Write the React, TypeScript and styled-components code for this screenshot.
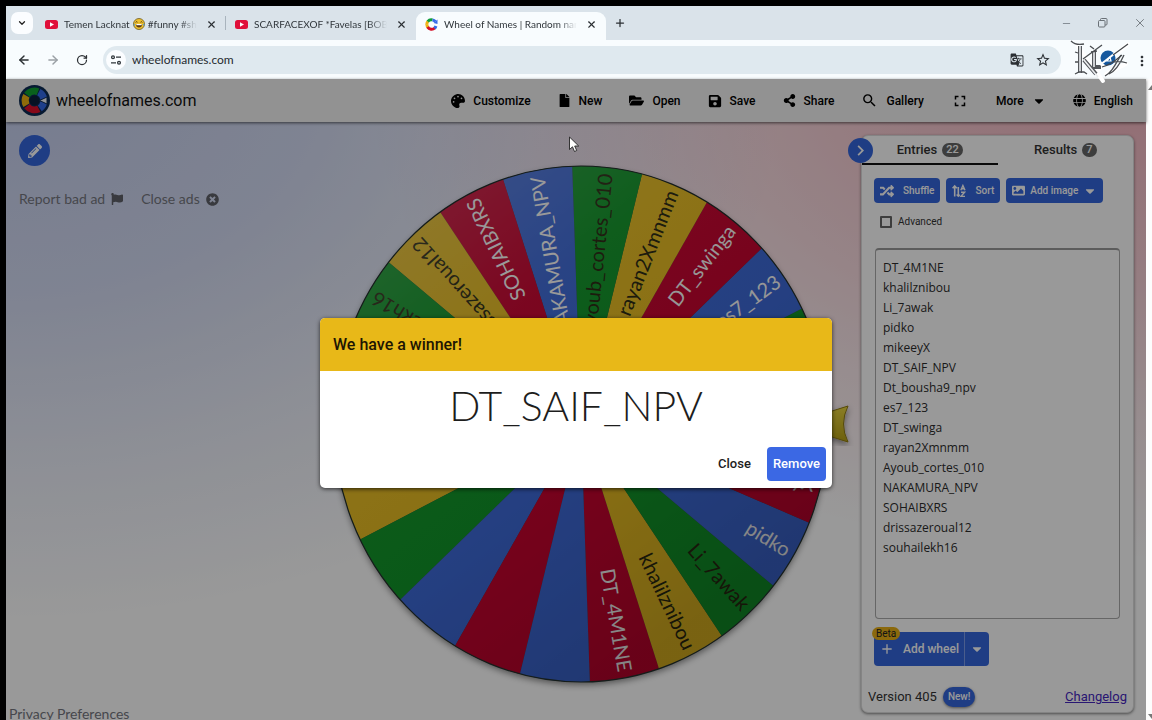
import React from "react";
import styled, { createGlobalStyle } from "styled-components";
import {
  FaPalette, FaFile, FaFolderOpen, FaSave, FaShareAlt, FaGlobe, FaRandom, FaImage,
  FaCaretDown, FaPencilAlt, FaFlag, FaTimesCircle,
} from "react-icons/fa";
import { MdSearch, MdFullscreen, MdGTranslate, MdStarOutline, MdMoreVert, MdAdd, MdChevronRight } from "react-icons/md";
import { ArrowLeft, ArrowRight, RotateCw, X, Plus, ChevronDown, Minus } from "lucide-react";

const ui = `Roboto, "Liberation Sans", sans-serif`;
const system = `"Open Sans", "Noto Sans", sans-serif`;
const display = `Lato, "Liberation Sans", sans-serif`;

const GlobalStyle = createGlobalStyle`
  * { box-sizing: border-box; }
  html, body { margin: 0; background: #000; overflow: hidden; }
  button { font: inherit; color: inherit; border: 0; background: none; padding: 0; cursor: pointer; }
  svg { display: block; flex: none; }
`;

const Screen = styled.div`
  height: 100vh;
  overflow: hidden;
  padding: 6px 0 0 6px;
  background: #000;
`;

const BrowserWindow = styled.div`
  display: flex;
  flex-direction: column;
  height: 100vh;
  background: #fff;
`;

/* ---- browser chrome ---- */

const TabStrip = styled.div`
  display: flex;
  align-items: stretch;
  flex: none;
  height: 34px;
  padding-top: 6px;
  background: #dae3ea;
  font: 10px ${display};
  color: #30363b;
`;

const TabSearch = styled.button`
  display: grid;
  place-items: center;
  width: 22px;
  height: 22px;
  margin: 0 3px 0 5px;
  border-radius: 7px;
  background: #fbfdff;
  color: #222;
`;

const Tab = styled.div<{ $active?: boolean; $divider?: boolean }>`
  position: relative;
  display: flex;
  align-items: center;
  width: 190px;
  padding: 0 8px 4px 9px;
  border-radius: 9px 9px 0 0;
  background: ${(p) => (p.$active ? "#f8fcfe" : "transparent")};
  &::after {
    content: "";
    display: ${(p) => (p.$divider ? "block" : "none")};
    position: absolute;
    right: 0;
    top: 4px;
    width: 1px;
    height: 14px;
    background: #a9b4bd;
  }
`;

const TabTitle = styled.span`
  display: flex;
  align-items: center;
  gap: 3px;
  flex: 1;
  margin: 0 7px 0 6px;
  overflow: hidden;
  white-space: nowrap;
  mask-image: linear-gradient(90deg, #000 86%, transparent);
`;

const IconButton = styled.button<{ $size?: number; $color?: string }>`
  display: grid;
  place-items: center;
  width: ${(p) => p.$size ?? 14}px;
  height: ${(p) => p.$size ?? 14}px;
  color: ${(p) => p.$color ?? "#2b2f33"};
`;

const NewTab = styled(IconButton)`
  margin: 4px 0 0 7px;
`;

const WindowControls = styled.div`
  display: flex;
  gap: 23px;
  margin: 4px 5px 0 auto;
`;

const Toolbar = styled.div`
  display: flex;
  align-items: center;
  flex: none;
  height: 39px;
  padding: 0 4px 0 10px;
  background: #f8fcfe;
`;

const NavButtons = styled.div`
  display: flex;
  gap: 13px;
  margin-right: 13px;
`;

const Omnibox = styled.div`
  display: flex;
  align-items: center;
  flex: 1;
  height: 28px;
  padding: 0 10px 0 3px;
  border-radius: 14px;
  background: #dfe9ef;
`;

const SiteInfo = styled.button`
  display: grid;
  place-items: center;
  width: 20px;
  height: 20px;
  border-radius: 10px;
  background: #fbfdff;
  color: #30363b;
`;

const Address = styled.input`
  flex: 1;
  min-width: 0;
  margin: 0 6px;
  padding: 0;
  border: 0;
  outline: 0;
  background: none;
  font: 12px ${display};
  color: #262b30;
`;

const OmniActions = styled.div`
  display: flex;
  gap: 10px;
`;

const Watermark = styled.svg`
  margin: 0 4px 0 9px;
  position: relative;
  z-index: 5;
  overflow: visible;
`;

/* ---- page ---- */

const Viewport = styled.div`
  display: flex;
  flex: 1;
  min-height: 0;
`;

const Page = styled.div`
  position: relative;
  display: flex;
  flex-direction: column;
  flex: 1;
  min-width: 0;
  background:
    radial-gradient(ellipse 780px 540px at 0 0, rgba(75, 105, 205, 0.32), rgba(75, 105, 205, 0.24) 40%, rgba(75, 105, 205, 0.1) 72%, transparent),
    radial-gradient(ellipse 780px 480px at 100% 0, rgba(225, 50, 80, 0.37), rgba(225, 50, 80, 0.23) 40%, rgba(225, 50, 80, 0.1) 70%, transparent),
    #fff;
`;

const ScrollTrack = styled.div`
  display: flex;
  flex-direction: column;
  justify-content: space-between;
  flex: none;
  width: 6px;
  padding: 6px 0 6px 2px;
  overflow: hidden;
  background: #fdfdfd;
`;

const Header = styled.header`
  display: flex;
  align-items: center;
  justify-content: space-between;
  flex: none;
  height: 43px;
  padding: 0 13px;
  background: #f4f4f4;
  box-shadow: 0 1px 3px rgba(0, 0, 0, 0.6);
  font-family: ${ui};
  color: #000;
`;

const Brand = styled.a`
  display: flex;
  align-items: center;
  gap: 6px;
  font-size: 16px;
  color: #111;
  text-decoration: none;
`;

const Menu = styled.nav`
  display: flex;
  align-items: center;
  gap: 27px;
  font-size: 12px;
  font-weight: 500;
`;

const MenuItem = styled.button`
  display: flex;
  align-items: center;
  gap: 8px;
`;

const Main = styled.main`
  display: grid;
  grid-template-columns: 1fr 540px 273px;
  flex: 1;
  min-height: 0;
  padding-right: 12px;
`;

const Side = styled.div`
  display: flex;
  flex-direction: column;
  align-items: flex-start;
  padding: 13px 0 4px 13px;
  font: 14px/20px ${display};
  color: #75777f;
`;

const RoundButton = styled.button<{ $size: number }>`
  display: grid;
  place-items: center;
  width: ${(p) => p.$size}px;
  height: ${(p) => p.$size}px;
  border-radius: 50%;
  background: #3566dc;
  color: #fff;
`;

const AdLinks = styled.div`
  display: flex;
  gap: 18px;
  margin-top: 23px;
`;

const AdLink = styled.button`
  display: flex;
  align-items: center;
  gap: 6px;
  & > svg { color: #606269; }
`;

const Privacy = styled.a`
  margin: auto 0 0 -10px;
  color: #75777f;
  text-decoration: none;
`;

const WheelArt = styled.svg`
  width: 100%;
  height: 606px;
  font: 20px ${display};
`;

const Panel = styled.section`
  position: relative;
  display: flex;
  flex-direction: column;
  margin: 13px 0 15px;
  border-radius: 7px;
  border: 1px solid #dcdcdc;
  background: #fff;
  box-shadow: 0 1px 3px rgba(0, 0, 0, 0.5);
  font-family: ${ui};
  color: #333;
`;

const Collapse = styled(RoundButton)`
  position: absolute;
  left: -14px;
  top: 2px;
  z-index: 1;
`;

const PanelTabs = styled.div`
  display: grid;
  grid-template-columns: 1fr 1fr;
  height: 29px;
`;

const PanelTab = styled.button<{ $active?: boolean }>`
  display: flex;
  align-items: center;
  justify-content: center;
  gap: 5px;
  font-size: 13px;
  font-weight: 500;
  border-bottom: 2px solid ${(p) => (p.$active ? "#111" : "transparent")};
`;

const Count = styled.span`
  padding: 0 4px;
  border-radius: 7px;
  background: #666;
  color: #fff;
  font-size: 11px;
  line-height: 14px;
`;

const Actions = styled.div`
  display: flex;
  gap: 6px;
  padding: 13px 12px 0;
`;

const Action = styled.button<{ $gap?: number }>`
  display: flex;
  align-items: center;
  gap: ${(p) => p.$gap ?? 9}px;
  height: 25px;
  padding: 0 6px;
  border-radius: 4px;
  background: #3566dc;
  color: #fff;
  font-size: 10px;
  font-weight: 500;
`;

const Advanced = styled.label`
  display: flex;
  align-items: center;
  gap: 6px;
  margin: 12px 0 0 18px;
  font-size: 10px;
  line-height: 13px;
  & > input {
    appearance: none;
    width: 12px;
    height: 12px;
    margin: 0;
    border: 2px solid #666;
    border-radius: 1px;
  }
`;

const EntryBox = styled.textarea`
  flex: 1;
  min-height: 0;
  margin: 20px 13px 13px;
  padding: 8px 7px;
  resize: none;
  outline: 0;
  overflow: hidden;
  border: 1px solid #aaa;
  border-top: 2px solid #999;
  border-radius: 4px;
  background: #fff;
  font: 12px/20px ${system};
  color: #2c2c2c;
`;

const AddWheel = styled.div`
  position: relative;
  display: flex;
  align-self: flex-start;
  height: 34px;
  margin-left: 12px;
  border-radius: 4px;
  background: #3566dc;
  color: #fff;
  font-size: 12px;
  font-weight: 500;
`;

const AddMain = styled.button`
  display: flex;
  align-items: center;
  gap: 8px;
  padding: 0 5px;
`;

const AddMore = styled.button`
  display: grid;
  place-items: center;
  width: 25px;
  border-left: 1px solid #7c9cea;
`;

const Beta = styled.span`
  position: absolute;
  left: -2px;
  top: -5px;
  padding: 0 4px;
  border-radius: 7px;
  background: #e8b016;
  color: #222;
  font-size: 10px;
  font-weight: 400;
  line-height: 13px;
`;

const PanelFooter = styled.footer`
  display: flex;
  align-items: center;
  height: 45px;
  padding: 16px 6px 0;
  margin-bottom: 1px;
  font-size: 13px;
  color: #333;
`;

const NewPill = styled.button`
  height: 20px;
  margin-left: 6px;
  padding: 0 5px;
  border-radius: 10px;
  background: #3566dc;
  color: #fff;
  font-size: 10px;
  font-weight: 500;
  box-shadow: 0 1px 3px rgba(0, 0, 0, 0.5);
`;

const Changelog = styled.a`
  margin-left: auto;
  color: #4527c0;
`;

/* ---- dialog ---- */

const Backdrop = styled.div`
  position: absolute;
  inset: 0;
  z-index: 2;
  display: grid;
  place-items: center;
  background: rgba(0, 0, 0, 0.4);
`;

const Dialog = styled.div`
  width: 512px;
  max-width: 90%;
  border-radius: 5px;
  overflow: hidden;
  background: #fff;
  box-shadow: 0 1px 4px rgba(0, 0, 0, 0.7);
  font-family: ${ui};
`;

const DialogTitle = styled.h2`
  margin: 0;
  padding: 0 13px;
  background: #e8b818;
  color: #1d1503;
  font-size: 16px;
  font-weight: 500;
  line-height: 53px;
`;

const Winner = styled.p`
  margin: 0;
  padding-top: 10px;
  text-align: center;
  font: 300 41px/50px ${display};
  color: #1d1d1d;
`;

const DialogActions = styled.div`
  display: flex;
  justify-content: flex-end;
  gap: 10px;
  padding: 16px 6px 7px;
  font-size: 13px;
  font-weight: 500;
`;

const DialogButton = styled.button<{ $primary?: boolean }>`
  height: 34px;
  padding: 0 6px;
  border-radius: 4px;
  background: ${(p) => (p.$primary ? "#3b68e4" : "transparent")};
  color: ${(p) => (p.$primary ? "#fff" : "#1d1d1d")};
`;

const Pointer = styled.svg`
  position: absolute;
  left: calc(50% - 8px);
  top: 57px;
  z-index: 3;
`;

/* ---- drawings ---- */

const YouTube = () => (
  <svg width="13" height="13" viewBox="0 0 13 13" aria-hidden="true">
    <rect y="2" width="13" height="9" rx="2.5" fill="#e0103a" />
    <path d="M5 4.3 9 6.5 5 8.7z" fill="#fff" />
  </svg>
);

const WheelFavicon = () => (
  <svg width="13" height="13" viewBox="0 0 13 13" fill="none" strokeWidth="3" aria-hidden="true">
    <path d="M1.8 6.5a4.7 4.7 0 0 1 1.2-3.2" stroke="#efb211" />
    <path d="M2.8 3.4A4.7 4.7 0 0 1 7.5 1.9" stroke="#0f9d3a" />
    <path d="M7.5 1.9a4.7 4.7 0 0 1 2.8 1.6" stroke="#3369e8" />
    <path d="M1.8 6.3a4.7 4.7 0 0 0 1.6 3.5" stroke="#efb211" />
    <path d="M2.6 9a4.7 4.7 0 0 0 7.2 1" stroke="#d50f25" />
    <path d="M12.5 1.5 8.6 5l3.9 1z" fill="#3369e8" stroke="none" />
    <path d="M9.5 10.3a4.7 4.7 0 0 0 1.4-2.3" stroke="#3369e8" />
  </svg>
);

const Laugh = () => (
  <svg width="12" height="12" viewBox="0 0 12 12" role="img" aria-label="😂">
    <circle cx="6" cy="6" r="5.5" fill="#eec02f" stroke="#6d5a1e" strokeWidth="0.8" />
    <path d="M2.8 6h6.4c0 2.3-1.4 3.6-3.2 3.6S2.8 8.3 2.8 6z" fill="#5b3a12" />
    <path d="M3.3 6h5.4v1.2H3.3z" fill="#fff" />
    <path d="M2.7 4.4c.5-.9 1.4-.9 1.9 0M7.4 4.4c.5-.9 1.4-.9 1.9 0" fill="none" stroke="#3d2a0b" strokeWidth="0.9" />
    <path d="M1.3 5.6c-1 1-.8 2 0 2.1s1.1-1 0-2.1zM10.7 5.6c-1 1-.8 2 0 2.1s1.1-1 0-2.1z" fill="#4ba3e0" />
  </svg>
);

const Tune = () => (
  <svg width="12" height="12" viewBox="0 0 12 12" fill="none" stroke="currentColor" strokeWidth="1.3" aria-hidden="true">
    <circle cx="3" cy="3.2" r="1.4" />
    <path d="M6 3.2h5M1 8.8h5" />
    <circle cx="9" cy="8.8" r="1.4" />
  </svg>
);

const RestoreIcon = () => (
  <svg width="10" height="10" viewBox="0 0 10 10" fill="none" stroke="currentColor" aria-hidden="true">
    <rect x="0.5" y="2.5" width="6.5" height="6.5" rx="1" />
    <path d="M2.5 2.5V1.5a1 1 0 0 1 1-1h4.5a1 1 0 0 1 1 1v4.5a1 1 0 0 1-1 1H7" />
  </svg>
);

const SortIcon = () => (
  <svg width="14" height="14" viewBox="0 0 14 14" fill="none" stroke="currentColor" strokeWidth="1.6" aria-hidden="true">
    <path d="M2.7 12.5V2M.6 4.2 2.7 2l2.1 2.2M6.300 3v9" />
    <path d="M4.7 10.5 6.3 12.2l1.5-1.5" />
    <path d="M8.8 6.2 10.9 1.5 13 6.2M9.5 4.8h2.8M9 8.3h3.6L9 12.4h4" strokeWidth="1.4" />
  </svg>
);

const BrandMark = () => (
  <svg width="31" height="31" viewBox="0 0 31 31" aria-hidden="true">
    <circle cx="15.5" cy="15.5" r="15.5" fill="#0d2c54" />
    <g fill="none" strokeWidth="7">
      <path d="M7.4 20.2a9.4 9.4 0 0 1 0-9.4" stroke="#efb211" />
      <path d="M8 9.9a9.4 9.4 0 0 1 11-3.1" stroke="#10a02f" />
      <path d="M19.8 7.2a9.4 9.4 0 0 1 5 7.2" stroke="#3369e8" />
      <path d="M24.8 16.6a9.4 9.4 0 0 1-4 6.7" stroke="#3369e8" />
      <path d="M8 21.1a9.4 9.4 0 0 0 11.8 2.7" stroke="#e0102a" />
    </g>
    <circle cx="15.5" cy="15.5" r="5" fill="#0a1f3d" />
    <path d="M20.5 15.5 28 12v7z" fill="#f4f6fa" stroke="#0d2c54" strokeWidth="1" />
  </svg>
);

const KloLogo = () => (
  <Watermark width="60" height="39" viewBox="0 0 60 39" aria-label="KLO">
    <g stroke="#fff" strokeWidth="4" strokeLinecap="round">
      <path d="M7 5 33 41M26 32 58 4M36 34 56 24" />
    </g>
    <g fill="none" stroke="#54575b" strokeWidth="4">
      <path d="M10 6v27M24 12v15M22 27h9M14 20 26 34" />
    </g>
    <g fill="none" stroke="#eceef0" strokeWidth="1.6">
      <path d="M10 6v27M24 12v15M14 20 28 37" />
    </g>
    <g fill="none" stroke="#4b4e52" strokeWidth="1.3">
      <path d="M1 1c4 4 8 4 13 3M5 34l4-2h5l3 2M5 12l3 1M5 22h3M13 19 32 5M21 12l6-1M35 36c7-4 10-11 16-21M39 34c7-3 11-10 15-19M37 24c7-3 13-3 20-1M20 6l4 3" />
    </g>
    <circle cx="38" cy="18" r="7.5" fill="#15589e" />
    <path d="M30 25 58 3" stroke="#fff" strokeWidth="2" />
    <path d="M43 15 58 4M32 27c9-2 14-7 20-12" stroke="#44474b" strokeWidth="1.2" fill="none" />
    <path d="M37 21l3-4 1 4z" stroke="#fff" strokeWidth="1.2" fill="none" />
  </Watermark>
);

/* ---- wheel ---- */

const CX = 260;
const CY = 302;
const RX = 247;
const RY = 258;
const STEP = 360 / 22;
const palette = { r: "#cb0430", y: "#ebbf22", g: "#12982a", b: "#3f6cdc" };

const entries = [
  "DT_4M1NE", "khalilznibou", "Li_7awak", "pidko", "mikeeyX", "DT_SAIF_NPV", "Dt_bousha9_npv", "es7_123",
  "DT_swinga", "rayan2Xmnmm", "Ayoub_cortes_010", "NAKAMURA_NPV", "SOHAIBXRS", "drissazeroual12", "souhailekh16",
];
const sliceColors = "rygbrygbrygbrygbrygbrb".split("") as (keyof typeof palette)[];

const rim = (deg: number, k = 1): [number, number] => {
  const a = (deg * Math.PI) / 180;
  return [CX + RX * k * Math.sin(a), CY - RY * k * Math.cos(a)];
};

const Wheel = () => (
  <WheelArt viewBox="0 0 540 606" role="img" aria-label="Wheel of names">
    <defs>
      <linearGradient id="shine" x1="0.1" y1="0.1" x2="0.7" y2="0.9">
        <stop offset="0" stopColor="#fff" stopOpacity="0.17" />
        <stop offset="0.3" stopColor="#fff" stopOpacity="0.03" />
        <stop offset="0.6" stopColor="#000" stopOpacity="0.02" />
        <stop offset="1" stopColor="#000" stopOpacity="0.14" />
      </linearGradient>
      <linearGradient id="gold" x1="0" y1="0" x2="0" y2="1">
        <stop offset="0" stopColor="#e8d440" />
        <stop offset="1" stopColor="#b59f14" />
      </linearGradient>
      <filter id="drop" x="-10%" y="-10%" width="120%" height="120%">
        <feDropShadow dx="0" dy="3" stdDeviation="3" floodOpacity="0.45" />
      </filter>
    </defs>
    <ellipse cx={CX} cy={CY} rx={RX} ry={RY} fill="#444" filter="url(#drop)" />
    {sliceColors.map((c, i) => {
      const start = -2.05 + STEP * (10 - i);
      const [x1, y1] = rim(start);
      const [x2, y2] = rim(start + STEP);
      return <path key={i} d={`M${CX} ${CY}L${x1} ${y1}A${RX} ${RY} 0 0 1 ${x2} ${y2}z`} fill={palette[c]} />;
    })}
    {entries.map((name, i) => {
      const mid = -2.05 + STEP * (10.5 - i);
      const [x, y] = rim(mid, 0.975);
      const angle = (Math.atan2(y - CY, x - CX) * 180) / Math.PI;
      const dark = sliceColors[i] === "y" || sliceColors[i] === "g";
      return (
        <text
          key={name}
          transform={`translate(${x} ${y}) rotate(${angle})`}
          textAnchor="end"
          dy="6"
          fill={dark ? "#2b2a12" : "#fff"}
        >
          {name}
        </text>
      );
    })}
    <ellipse cx={CX} cy={CY} rx={RX} ry={RY} fill="url(#shine)" stroke="#23302c" strokeWidth="1.2" />
    <path d="M470 302 527 284q-9 18 0 36z" fill="url(#gold)" stroke="#8f7a10" filter="url(#drop)" />
  </WheelArt>
);

const menu = [
  { label: "Customize", icon: <FaPalette size={14} /> },
  { label: "New", icon: <FaFile size={13} /> },
  { label: "Open", icon: <FaFolderOpen size={15} /> },
  { label: "Save", icon: <FaSave size={14} /> },
  { label: "Share", icon: <FaShareAlt size={13} /> },
  { label: "Gallery", icon: <MdSearch size={17} /> },
];

export default function App() {
  return (
    <Screen>
      <GlobalStyle />
      <BrowserWindow>
        <TabStrip>
          <TabSearch aria-label="Search tabs"><ChevronDown size={10} strokeWidth={3} /></TabSearch>
          <Tab $divider>
            <YouTube />
            <TabTitle>Temen Lacknat <Laugh /> #funny #sho</TabTitle>
            <IconButton aria-label="Close tab"><X size={11} strokeWidth={2.5} /></IconButton>
          </Tab>
          <Tab>
            <YouTube />
            <TabTitle>SCARFACEXOF *Favelas [BOBO</TabTitle>
            <IconButton aria-label="Close tab"><X size={11} strokeWidth={2.5} /></IconButton>
          </Tab>
          <Tab $active>
            <WheelFavicon />
            <TabTitle>Wheel of Names | Random nam</TabTitle>
            <IconButton aria-label="Close tab"><X size={11} strokeWidth={2.5} /></IconButton>
          </Tab>
          <NewTab aria-label="New tab"><Plus size={12} strokeWidth={2.5} /></NewTab>
          <WindowControls>
            <IconButton aria-label="Minimize" $color="#7e868d"><Minus size={11} strokeWidth={2} /></IconButton>
            <IconButton aria-label="Restore" $color="#6a7177"><RestoreIcon /></IconButton>
            <IconButton aria-label="Close" $color="#6a7177"><X size={14} strokeWidth={1.5} /></IconButton>
          </WindowControls>
        </TabStrip>
        <Toolbar>
          <NavButtons>
            <IconButton $size={16} aria-label="Back"><ArrowLeft size={14} strokeWidth={2.5} /></IconButton>
            <IconButton $size={16} $color="#9aa0a5" aria-label="Forward"><ArrowRight size={14} strokeWidth={2.5} /></IconButton>
            <IconButton $size={16} aria-label="Reload"><RotateCw size={12} strokeWidth={2.5} /></IconButton>
          </NavButtons>
          <Omnibox>
            <SiteInfo aria-label="Site information"><Tune /></SiteInfo>
            <Address aria-label="Address" defaultValue="wheelofnames.com" />
            <OmniActions>
              <IconButton $size={16} aria-label="Translate"><MdGTranslate size={14} /></IconButton>
              <IconButton $size={16} aria-label="Bookmark"><MdStarOutline size={16} /></IconButton>
            </OmniActions>
          </Omnibox>
          <KloLogo />
          <IconButton aria-label="Menu"><MdMoreVert size={16} /></IconButton>
        </Toolbar>

        <Viewport>
          <Page>
            <Header>
              <Brand href="#"><BrandMark />wheelofnames.com</Brand>
              <Menu>
                {menu.map((m) => (
                  <MenuItem key={m.label}>{m.icon}{m.label}</MenuItem>
                ))}
                <MenuItem aria-label="Fullscreen"><MdFullscreen size={18} /></MenuItem>
                <MenuItem>More<FaCaretDown size={14} /></MenuItem>
                <MenuItem><FaGlobe size={13} />English</MenuItem>
              </Menu>
            </Header>
            <Main>
              <Side>
                <RoundButton $size={31} aria-label="Edit title"><FaPencilAlt size={14} /></RoundButton>
                <AdLinks>
                  <AdLink>Report bad ad<FaFlag size={12} /></AdLink>
                  <AdLink>Close ads<FaTimesCircle size={13} /></AdLink>
                </AdLinks>
                <Privacy href="#">Privacy Preferences</Privacy>
              </Side>
              <Wheel />
              <Panel>
                <Collapse $size={25} aria-label="Hide panel"><MdChevronRight size={21} /></Collapse>
                <PanelTabs>
                  <PanelTab $active>Entries <Count>22</Count></PanelTab>
                  <PanelTab>Results <Count>7</Count></PanelTab>
                </PanelTabs>
                <Actions>
                  <Action><FaRandom size={14} />Shuffle</Action>
                  <Action><SortIcon />Sort</Action>
                  <Action $gap={5}><FaImage size={13} />Add image<FaCaretDown size={14} /></Action>
                </Actions>
                <Advanced><input type="checkbox" />Advanced</Advanced>
                <EntryBox aria-label="Entries" spellCheck={false} defaultValue={entries.join("\n")} />
                <AddWheel>
                  <AddMain><MdAdd size={16} />Add wheel</AddMain>
                  <AddMore aria-label="More wheel options"><FaCaretDown size={14} /></AddMore>
                  <Beta>Beta</Beta>
                </AddWheel>
                <PanelFooter>
                  Version 405
                  <NewPill>New!</NewPill>
                  <Changelog href="#">Changelog</Changelog>
                </PanelFooter>
              </Panel>
            </Main>
            <Backdrop>
              <Dialog role="dialog" aria-labelledby="winner-title">
                <DialogTitle id="winner-title">We have a winner!</DialogTitle>
                <Winner>DT_SAIF_NPV</Winner>
                <DialogActions>
                  <DialogButton>Close</DialogButton>
                  <DialogButton $primary>Remove</DialogButton>
                </DialogActions>
              </Dialog>
            </Backdrop>
            <Pointer width="12" height="17" viewBox="0 0 12 17" aria-hidden="true">
              <path d="M1.5 1v12.5l3-2.7 2 4.7 2.2-1-2-4.5h4z" fill="#fff" stroke="#222" strokeWidth="0.9" />
            </Pointer>
          </Page>
          <ScrollTrack aria-hidden="true">
            <svg width="8" height="6" viewBox="0 0 8 6"><path d="M0 5 4 0l4 5z" fill="#777" /></svg>
            <svg width="8" height="6" viewBox="0 0 8 6"><path d="M0 0 4 5l4-5z" fill="#777" /></svg>
          </ScrollTrack>
        </Viewport>
      </BrowserWindow>
    </Screen>
  );
}
